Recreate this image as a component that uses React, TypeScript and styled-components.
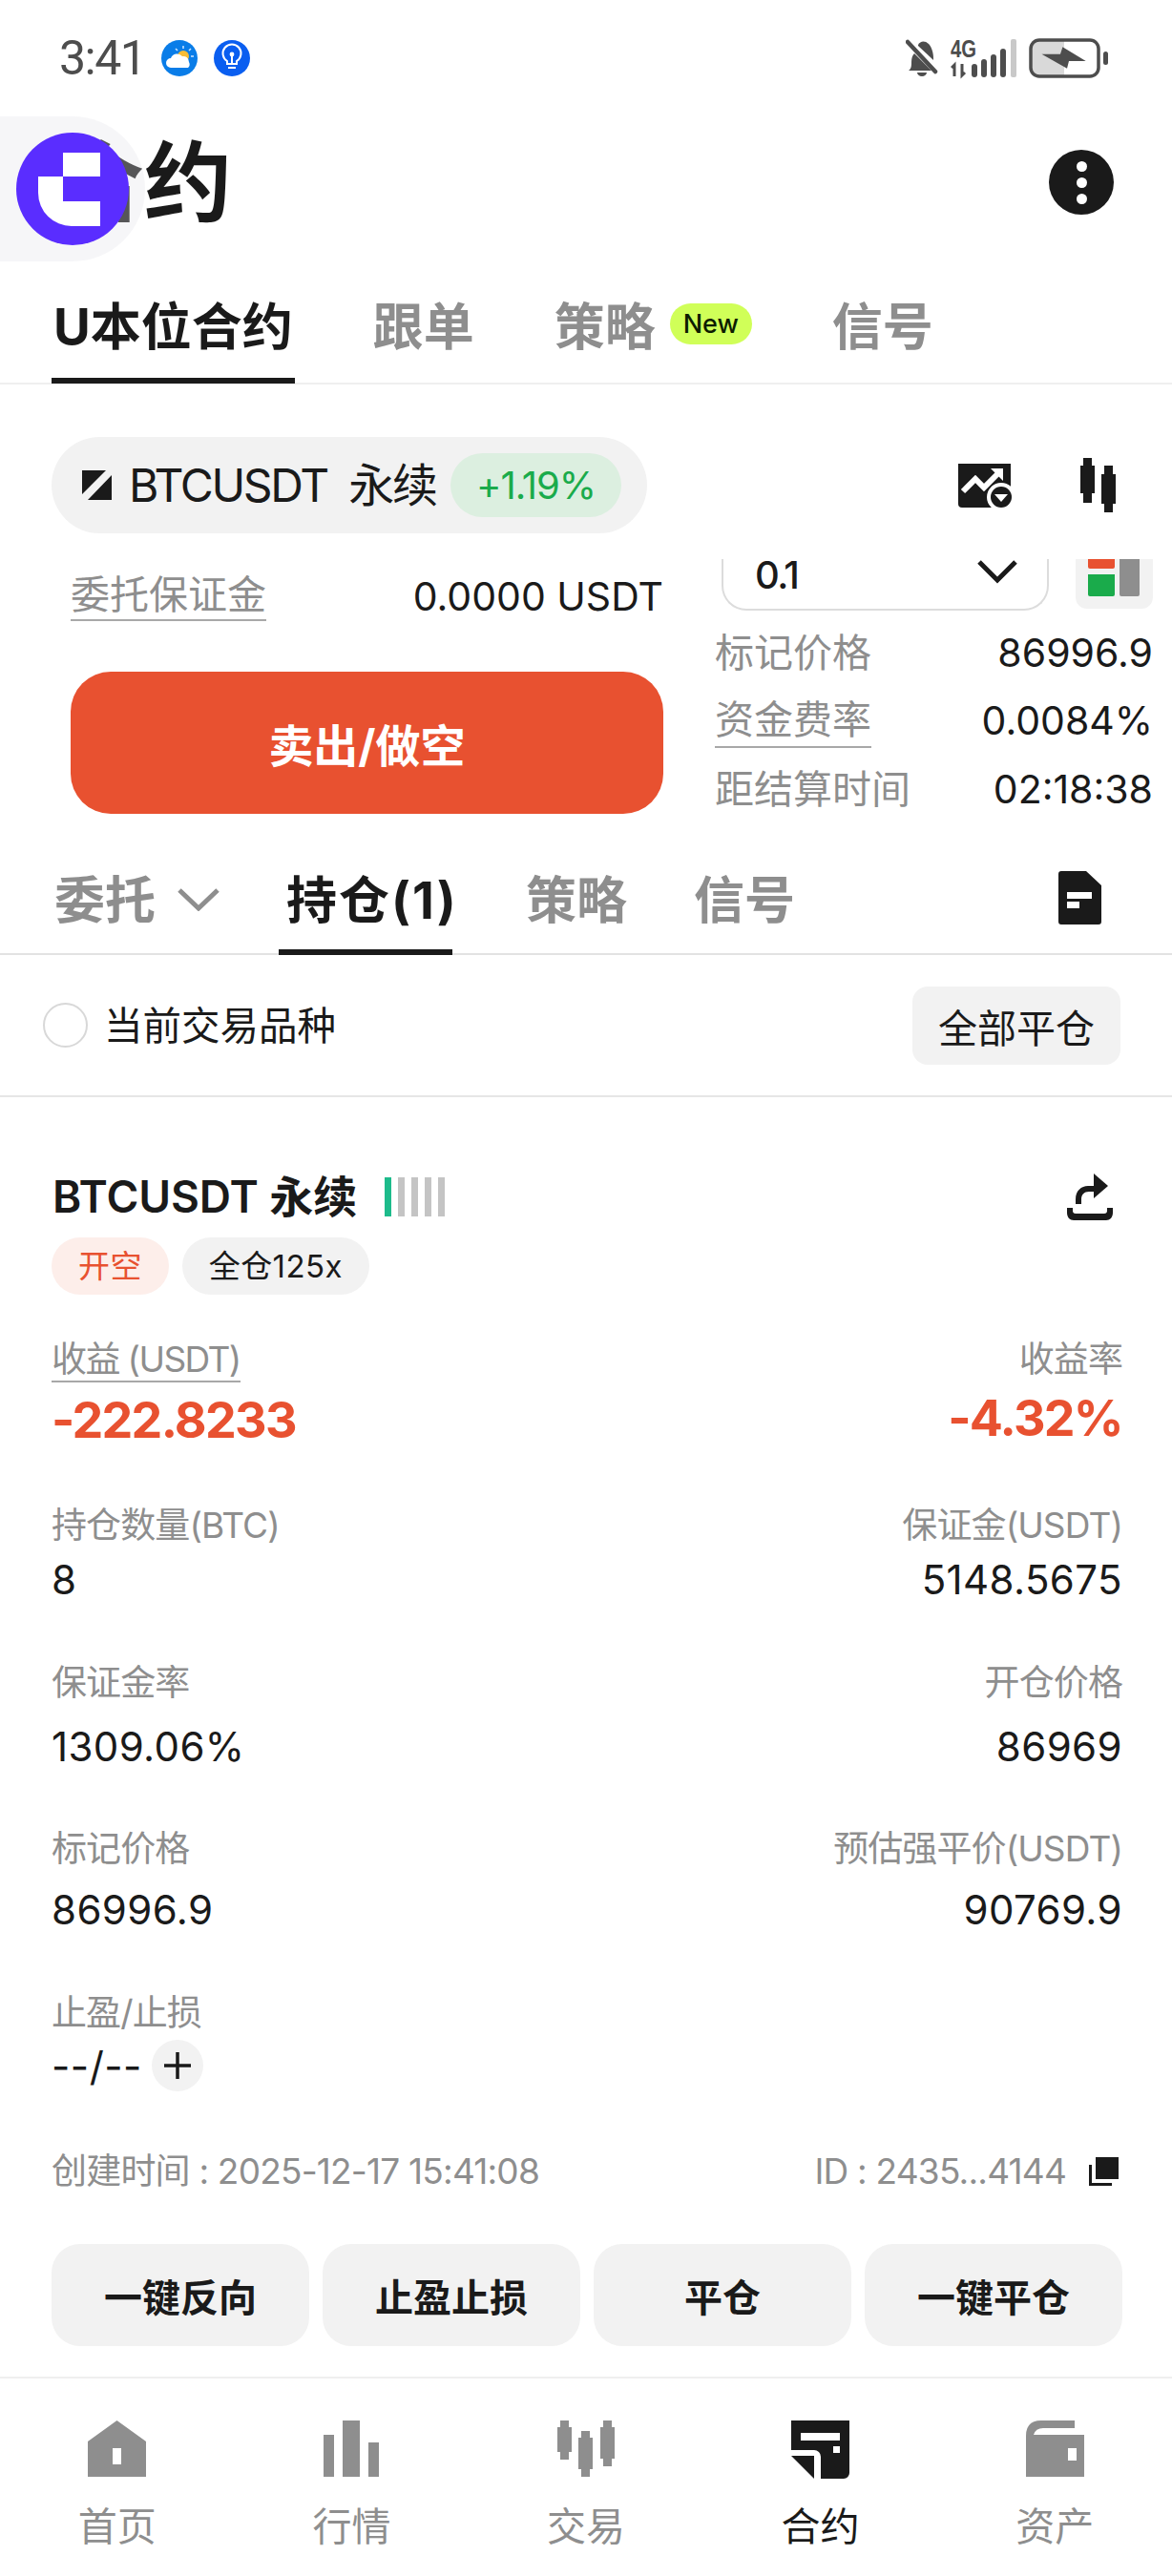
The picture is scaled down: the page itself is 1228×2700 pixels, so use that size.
import * as React from "react";
import styled, { createGlobalStyle } from "styled-components";

const COLORS = {
  text: "#1a1a1a",
  muted: "#8e8e8e",
  fill: "#f2f2f2",
  line: "#efefef",
  sell: "#e85130",
  rise: "#1aab4b",
};

const FONT = `Inter, "Noto Sans CJK SC", sans-serif`;

const GlobalStyle = createGlobalStyle`
  html, body {
    margin: 0;
    padding: 0;
    background: #fff;
  }
  * {
    box-sizing: border-box;
  }
`;

const Page = styled.div`
  position: relative;
  width: 1228px;
  height: 2700px;
  overflow: hidden;
  background: #fff;
  color: ${COLORS.text};
  font-family: ${FONT};
`;

/* ---- status bar ---- */

const StatusBar = styled.div`
  height: 122px;
  padding: 0 67px 0 62px;
  display: flex;
  align-items: center;
  justify-content: space-between;
`;

const StatusGroup = styled.div<{ $gap: number }>`
  display: flex;
  align-items: center;
  gap: ${(p) => p.$gap}px;
`;

const Clock = styled.span`
  font-family: Roboto, sans-serif;
  font-size: 50px;
  line-height: 50px;
  letter-spacing: -1.5px;
  color: #4d4d4d;
`;

const FourG = styled.text`
  font-family: "Liberation Sans", sans-serif;
  font-size: 25px;
  font-weight: 700;
  fill: #4d4d4d;
`;

/* ---- title ---- */

const TitleRow = styled.div`
  height: 152px;
  padding: 0 61px 14px 59px;
  display: flex;
  align-items: center;
  justify-content: space-between;
`;

const Title = styled.h1`
  margin: 2px 0 0;
  font-size: 92px;
  line-height: 100px;
  font-weight: 700;
`;

const MoreButton = styled.div`
  width: 68px;
  height: 68px;
  border-radius: 50%;
  background: ${COLORS.text};
  display: flex;
  flex-direction: column;
  align-items: center;
  justify-content: center;
  gap: 6px;
`;

const MoreDot = styled.i`
  width: 11px;
  height: 11px;
  border-radius: 50%;
  background: #fff;
`;

const FloatingDock = styled.div`
  position: absolute;
  left: 0;
  top: 122px;
  width: 152px;
  height: 152px;
  border-radius: 0 76px 76px 0;
  background: rgba(225, 225, 232, 0.3);
  display: flex;
  align-items: center;
  padding-left: 17px;
`;

/* ---- top tabs ---- */

const TopTabs = styled.div`
  height: 129px;
  padding-left: 54px;
  display: flex;
  gap: 80px;
  border-bottom: 2px solid ${COLORS.line};
`;

const TopTab = styled.div<{ $active?: boolean }>`
  height: 128px;
  padding: 32px 2px 0;
  font-size: 53px;
  line-height: 74px;
  font-weight: 700;
  white-space: nowrap;
  display: flex;
  align-items: flex-start;
  color: ${(p) => (p.$active ? COLORS.text : COLORS.muted)};
  border-bottom: 6px solid ${(p) => (p.$active ? COLORS.text : "transparent")};
`;

const NewBadge = styled.span`
  margin: 12px 0 0 15px;
  width: 86px;
  height: 43px;
  border-radius: 22px;
  background: #d0ff58;
  color: #0d1c00;
  font-size: 27px;
  line-height: 43px;
  font-weight: 500;
  text-align: center;
`;

/* ---- instrument ---- */

const InstrumentRow = styled.div`
  margin-top: 55px;
  padding: 0 59px 0 54px;
  display: flex;
  align-items: center;
  justify-content: space-between;
`;

const InstrumentPill = styled.div`
  width: 624px;
  height: 101px;
  border-radius: 51px;
  background: ${COLORS.fill};
  padding: 0 27px 0 32px;
  display: flex;
  align-items: center;
`;

const InstrumentName = styled.span`
  margin-left: 18px;
  font-size: 48px;
  line-height: 60px;
  letter-spacing: -2.3px;
  white-space: pre;
`;

const ChangePill = styled.span`
  margin-left: auto;
  width: 179px;
  height: 67px;
  border-radius: 34px;
  background: #dcefe0;
  color: ${COLORS.rise};
  font-size: 40px;
  line-height: 67px;
  letter-spacing: -1px;
  text-align: center;
`;

const ChartTools = styled.div`
  display: flex;
  align-items: center;
  gap: 72px;
`;

/* ---- order panel ---- */

const OrderPanel = styled.div`
  margin-top: 27px;
  height: 307px;
  padding: 0 20px 0 74px;
  display: grid;
  grid-template-columns: 621px 459px;
  justify-content: space-between;
`;

const OrderLeft = styled.div`
  display: flex;
  flex-direction: column;
`;

const MarginRow = styled.div`
  margin-top: 15px;
  height: 48px;
  display: flex;
  align-items: center;
  justify-content: space-between;
`;

const Dotted = styled.span`
  display: inline-block;
  color: ${COLORS.muted};
  border-bottom: 2px solid #a8a8a8;
`;

const MarginLabel = styled(Dotted)`
  font-size: 41px;
  line-height: 48px;
  padding-bottom: 2px;
`;

const PlainValue = styled.span`
  font-size: 41px;
  line-height: 48px;
  white-space: nowrap;
`;

const SellButton = styled.button`
  margin-top: 55px;
  height: 149px;
  border: none;
  border-radius: 42px;
  background: ${COLORS.sell};
  color: #fff;
  font-family: ${FONT};
  font-size: 47px;
  font-weight: 700;
`;

const OrderRight = styled.div`
  display: flex;
  flex-direction: column;
`;

const SizeRow = styled.div`
  height: 54px;
  display: flex;
  justify-content: space-between;
  padding-left: 7px;
`;

const SizeSelect = styled.div`
  width: 343px;
  height: 54px;
  padding: 0 31px 0 33px;
  display: flex;
  justify-content: space-between;
  border: 2px solid #dcdcdc;
  border-top: none;
  border-radius: 0 0 26px 26px;
`;

const SizeValue = styled.span`
  font-size: 40px;
  line-height: 34px;
  font-weight: 500;
  letter-spacing: -1.5px;
`;

const DepthToggle = styled.div`
  width: 81px;
  height: 52px;
  padding: 0 14px 0 13px;
  background: ${COLORS.fill};
  border-radius: 0 0 12px 12px;
  display: grid;
  grid-template-columns: 28px 21px;
  justify-content: space-between;
`;

const DepthStack = styled.div`
  height: 39px;
  display: flex;
  flex-direction: column;
  gap: 6px;
`;

const DepthBlock = styled.i<{ $color: string; $h: number }>`
  display: block;
  height: ${(p) => p.$h}px;
  border-radius: 0 0 2px 2px;
  background: ${(p) => p.$color};
`;

const QuoteList = styled.div`
  margin-top: 8px;
`;

const QuoteRow = styled.div`
  height: 71.5px;
  display: flex;
  align-items: center;
  justify-content: space-between;
`;

const QuoteLabel = styled.span`
  color: ${COLORS.muted};
  font-size: 41px;
  line-height: 48px;
`;

const QuoteLabelLined = styled(Dotted)`
  font-size: 41px;
  line-height: 48px;
  padding-bottom: 4px;
  margin-top: 4px;
`;

/* ---- list tabs ---- */

const ListTabs = styled.div`
  height: 108px;
  padding: 0 74px 0 49px;
  display: flex;
  gap: 54px;
  border-bottom: 2px solid #e2e2e2;
`;

const ListTab = styled.div<{ $active?: boolean }>`
  height: 108px;
  padding: 16px 8px 0;
  font-size: 53px;
  line-height: 70px;
  font-weight: 700;
  white-space: nowrap;
  display: flex;
  align-items: flex-start;
  color: ${(p) => (p.$active ? COLORS.text : COLORS.muted)};
  border-bottom: 6px solid ${(p) => (p.$active ? COLORS.text : "transparent")};
  width: ${(p) => (p.$active ? "182px" : "auto")};
  margin-right: ${(p) => (p.$active ? "15px" : "0")};
  letter-spacing: ${(p) => (p.$active ? "2px" : "0")};
`;

const ListTabChevron = styled.svg`
  margin: 22px 0 0 23px;
`;

const ListIcon = styled.svg`
  margin: 20px 0 0 auto;
`;

/* ---- filter ---- */

const FilterRow = styled.div`
  height: 149px;
  padding: 0 54px 0 45px;
  display: flex;
  align-items: center;
  border-bottom: 2px solid #e6e6e6;
`;

const RadioMark = styled.span`
  width: 47px;
  height: 47px;
  border-radius: 50%;
  border: 2px solid #d8d8d8;
`;

const FilterLabel = styled.span`
  margin: 2px 0 0 17px;
  font-size: 40.5px;
  line-height: 50px;
`;

const CloseAllButton = styled.button`
  margin-left: auto;
  width: 218px;
  height: 82px;
  border: none;
  border-radius: 16px;
  background: ${COLORS.fill};
  color: ${COLORS.text};
  font-family: ${FONT};
  font-size: 41px;
`;

/* ---- position card ---- */

const PositionCard = styled.div`
  padding: 0 52px 0 54px;
`;

const CardHeader = styled.div`
  margin-top: 81px;
  height: 46px;
  display: flex;
  align-items: center;
`;

const CardTitle = styled.span`
  margin-left: 1px;
  font-size: 46px;
  line-height: 46px;
  font-weight: 600;
  letter-spacing: -0.1px;
  white-space: pre;
`;

const RiskBars = styled.div`
  margin-left: 29px;
  display: flex;
  gap: 7px;
`;

const RiskBar = styled.i<{ $on?: boolean }>`
  width: 7px;
  height: 41px;
  background: ${(p) => (p.$on ? "#1dbb8b" : "#c4c4c4")};
`;

const ShareSlot = styled.div`
  margin-left: auto;
  margin-right: 10px;
  height: 49px;
`;

const TagRow = styled.div`
  margin-top: 20px;
  display: flex;
  gap: 14px;
`;

const Tag = styled.span<{ $tone?: "sell" }>`
  height: 60px;
  padding: 0 28px;
  border-radius: 30px;
  font-size: 33px;
  line-height: 60px;
  letter-spacing: 0.4px;
  background: ${(p) => (p.$tone === "sell" ? "#fdeeea" : COLORS.fill)};
  color: ${(p) => (p.$tone === "sell" ? COLORS.sell : COLORS.text)};
`;

const MetricRow = styled.div<{ $top: number }>`
  margin-top: ${(p) => p.$top}px;
  display: flex;
  justify-content: space-between;
`;

const Metric = styled.div<{ $right?: boolean }>`
  display: flex;
  flex-direction: column;
  align-items: ${(p) => (p.$right ? "flex-end" : "flex-start")};
`;

const MetricLabel = styled.span`
  height: 44px;
  font-size: 37px;
  line-height: 44px;
  letter-spacing: -0.9px;
  color: ${COLORS.muted};
`;

const MetricLabelLined = styled(MetricLabel)`
  height: 46px;
  letter-spacing: -1.6px;
  border-bottom: 2px solid #a8a8a8;
`;

const MetricValue = styled.span<{ $gap: number }>`
  margin-top: ${(p) => p.$gap}px;
  height: 56px;
  font-size: 42px;
  line-height: 56px;
  letter-spacing: 0.4px;
`;

const PnlValue = styled.span`
  margin-top: 12px;
  height: 56px;
  font-size: 52px;
  line-height: 56px;
  font-weight: 700;
  letter-spacing: -1.7px;
  color: ${COLORS.sell};
`;

const StopLine = styled.div`
  margin-top: 5px;
  height: 56px;
  display: flex;
  align-items: center;
  font-size: 42px;
  letter-spacing: 0.5px;
`;

const AddButton = styled.span`
  margin-left: 10px;
  width: 54px;
  height: 54px;
  border-radius: 50%;
  background: ${COLORS.fill};
  display: flex;
  align-items: center;
  justify-content: center;
`;

const MetaRow = styled.div`
  margin-top: 61px;
  height: 44px;
  display: flex;
  align-items: center;
  justify-content: space-between;
  color: ${COLORS.muted};
  font-size: 37px;
  line-height: 44px;
  letter-spacing: -0.8px;
`;

const MetaId = styled.span`
  display: flex;
  align-items: center;
  gap: 24px;
  padding-right: 4px;
`;

const ActionRow = styled.div`
  margin-top: 54px;
  display: grid;
  grid-template-columns: repeat(4, 1fr);
  gap: 14px;
`;

const ActionButton = styled.button`
  height: 107px;
  border: none;
  border-radius: 30px;
  background: ${COLORS.fill};
  color: ${COLORS.text};
  font-family: ${FONT};
  font-size: 40px;
  font-weight: 700;
`;

/* ---- bottom navigation ---- */

const BottomNav = styled.nav`
  margin-top: 32px;
  height: 210px;
  border-top: 2px solid ${COLORS.line};
  display: grid;
  grid-template-columns: repeat(5, 1fr);
`;

const NavItem = styled.div<{ $active?: boolean }>`
  padding-top: 44px;
  display: flex;
  flex-direction: column;
  align-items: center;
  color: ${(p) => (p.$active ? COLORS.text : COLORS.muted)};
`;

const NavIcon = styled.div`
  height: 61px;
  display: flex;
  align-items: flex-start;
`;

const NavLabel = styled.span`
  margin-top: 25px;
  font-size: 41px;
  line-height: 50px;
`;

/* ---- drawings ---- */

const WeatherIcon = () => (
  <svg width="38" height="38" viewBox="0 0 38 38">
    <circle cx="19" cy="19" r="19" fill="#0a7de8" />
    <circle cx="23" cy="17" r="6" fill="#f7bd37" />
    <path d="M23 6v3M31 9l-2 2M34 17h-3M15 9l2 2" stroke="#cfe6ff" strokeWidth="1.5" />
    <path d="M10 29a5 5 0 0 1 0-10 7 7 0 0 1 12-2 6 6 0 0 1 7 6 5 5 0 0 1-1 6z" fill="#fff" />
  </svg>
);

const BulbIcon = () => (
  <svg width="38" height="38" viewBox="0 0 38 38">
    <circle cx="19" cy="19" r="19" fill="#0a5ef0" />
    <path d="M14 25v-3a9.5 9.5 0 1 1 10 0v3z" fill="none" stroke="#fff" strokeWidth="2" />
    <path d="M15 29h8" stroke="#fff" strokeWidth="2" />
    <circle cx="19" cy="15" r="2.4" fill="#fff" />
    <path d="M19 16v8" stroke="#fff" strokeWidth="2" />
  </svg>
);

const MutedBell = () => (
  <svg width="34" height="40" viewBox="0 0 34 40">
    <path d="M3 33c3-2 3-5 3-9 0-4 1-7 3-9l18 18z" fill="#4d4d4d" />
    <path d="M13 6c2-4 7-5 11-1 3 3 5 9 5 15v2L13 7z" fill="#4d4d4d" />
    <path d="M2 3l29 31" stroke="#4d4d4d" strokeWidth="4.5" strokeLinecap="round" />
    <path d="M12 35h10a5 4 0 0 1-10 0z" fill="#4d4d4d" />
  </svg>
);

const SignalIcon = () => (
  <svg width="69" height="52" viewBox="0 -6 69 52">
    <FourG x="0" y="19" textLength="27" lengthAdjust="spacingAndGlyphs">
      4G
    </FourG>
    <path d="M4 39V27l-3 3M12 26v12l3-3" fill="none" stroke="#4d4d4d" strokeWidth="3" />
    <rect x="22" y="26" width="6" height="14" rx="3" fill="#4d4d4d" />
    <rect x="32" y="21" width="6" height="19" rx="3" fill="#4d4d4d" />
    <rect x="42" y="16" width="6" height="24" rx="3" fill="#4d4d4d" />
    <rect x="52" y="10" width="6" height="30" rx="3" fill="#4d4d4d" />
    <rect x="63" y="0" width="6" height="40" rx="2" fill="#c9c9c9" />
  </svg>
);

const BatteryIcon = () => (
  <svg width="83" height="42" viewBox="0 0 83 42">
    <rect x="3" y="3" width="34" height="36" fill="#d9d9d9" />
    <rect x="2" y="2" width="71" height="38" rx="9" fill="none" stroke="#4d4d4d" strokeWidth="3.5" />
    <path d="M13.500 16.700H33l2.400-7.400L59.700 24H42l-2 7.700z" fill="#4d4d4d" />
    <rect x="78" y="14" width="5" height="14" rx="2.5" fill="#4d4d4d" />
  </svg>
);

const LogoMark = () => (
  <svg width="118" height="118" viewBox="0 0 118 118">
    <circle cx="59" cy="59" r="59" fill="#5a2dff" />
    <path d="M49 21h39v25H49zM23 46h26v26h39v26H58a35 35 0 0 1-35-35z" fill="#fff" />
  </svg>
);

const FuturesGlyph = () => (
  <svg width="31" height="31" viewBox="0 0 31 31">
    <path d="M0 0h25L0 25zM31 5v26H6z" fill={COLORS.text} />
  </svg>
);

const ChartAlertIcon = () => (
  <svg width="56" height="46" viewBox="0 0 56 46">
    <path d="M0 0h55v46H4a4 4 0 0 1-4-4z" fill={COLORS.text} />
    <path d="M5 29l13-13 9 9 14-14" fill="none" stroke="#fff" strokeWidth="6" />
    <path d="M34 5h13v13z" fill="#fff" />
    <circle cx="45" cy="35" r="15" fill="#fff" />
    <circle cx="45" cy="35" r="11" fill={COLORS.text} />
    <path d="M38 32h14l-7 8z" fill="#fff" />
  </svg>
);

const CandleIcon = () => (
  <svg width="37" height="57" viewBox="0 0 37 57" fill={COLORS.text}>
    <path d="M3 0h9v8h3v29h-3v10H3V37H0V8h3z" />
    <path d="M25 8h9v9h3v31h-3v9h-9v-9h-3V17h3z" />
  </svg>
);

const ShareArrow = () => (
  <svg width="48" height="49" viewBox="0 0 48 49" fill={COLORS.text}>
    <path d="M9 32v-5c0-9 6-14 13-14h6v6h-5c-5 0-8 3-8 8v5z" />
    <path d="M28 0l15 13-15 13z" />
    <path d="M0 36h6v3c0 2 1 3 3 3h30c2 0 3-1 3-3v-3h6v5c0 5-3 8-7 8H7c-4 0-7-3-7-8z" />
  </svg>
);

const CopyIcon = () => (
  <svg width="31" height="30" viewBox="0 0 31 30" fill={COLORS.text}>
    <rect x="7" y="0" width="24" height="23" />
    <path d="M0 8h3v19h21v3H0z" />
  </svg>
);

const HomeIcon = () => (
  <svg width="61" height="59" viewBox="0 0 61 59" fill="currentColor">
    <path fillRule="evenodd" d="M30.500 0L61 22v37H0V22zM26 29v17h9V29z" />
  </svg>
);

const MarketIcon = () => (
  <svg width="58" height="59" viewBox="0 0 58 59" fill="currentColor">
    <rect x="0" y="15" width="11" height="44" />
    <rect x="20" y="0" width="18" height="59" />
    <rect x="47" y="23" width="11" height="36" />
  </svg>
);

const TradeIcon = () => (
  <svg width="60" height="59" viewBox="0 0 60 59" fill="currentColor">
    <path d="M3 0h9v7h3v26h-3v8H3v-8H0V7h3z" />
    <path d="M25 11h9v7h3v33h-3v8h-9v-8h-3V18h3z" />
    <path d="M48 0h9v7h3v33h-3v8h-9v-8h-3V7h3z" />
  </svg>
);

const ContractIcon = () => (
  <svg width="61" height="61" viewBox="0 0 61 61" fill="currentColor">
    <path
      fillRule="evenodd"
      d="M0 0h61v55a6 6 0 0 1-6 6H31V38a7 7 0 0 0-7-7H0zM10 13v8h41v-8zM44 27v7h7v-7z"
    />
    <path d="M0 37h24v24z" />
  </svg>
);

const WalletIcon = () => (
  <svg width="61" height="59" viewBox="0 0 61 59" fill="currentColor">
    <path fillRule="evenodd" d="M0 59V16Q0 0 16 0h35v8H18q-8 0-10 7h53v44zM44 29v13h9V29z" />
  </svg>
);

const NAV_ITEMS = [
  { label: "首页", icon: <HomeIcon /> },
  { label: "行情", icon: <MarketIcon /> },
  { label: "交易", icon: <TradeIcon /> },
  { label: "合约", icon: <ContractIcon />, active: true },
  { label: "资产", icon: <WalletIcon /> },
];

const ACTIONS = ["一键反向", "止盈止损", "平仓", "一键平仓"];

export default function App() {
  return (
    <Page>
      <GlobalStyle />

      <StatusBar>
        <StatusGroup $gap={17}>
          <Clock>3:41</Clock>
          <WeatherIcon />
          <BulbIcon />
        </StatusGroup>
        <StatusGroup $gap={13}>
          <MutedBell />
          <SignalIcon />
          <BatteryIcon />
        </StatusGroup>
      </StatusBar>

      <TitleRow>
        <Title>合约</Title>
        <MoreButton>
          <MoreDot />
          <MoreDot />
          <MoreDot />
        </MoreButton>
      </TitleRow>

      <FloatingDock>
        <LogoMark />
      </FloatingDock>

      <TopTabs>
        <TopTab $active>U本位合约</TopTab>
        <TopTab>跟单</TopTab>
        <TopTab>
          策略
          <NewBadge>New</NewBadge>
        </TopTab>
        <TopTab>信号</TopTab>
      </TopTabs>

      <InstrumentRow>
        <InstrumentPill>
          <FuturesGlyph />
          <InstrumentName>BTCUSDT  永续</InstrumentName>
          <ChangePill>+1.19%</ChangePill>
        </InstrumentPill>
        <ChartTools>
          <ChartAlertIcon />
          <CandleIcon />
        </ChartTools>
      </InstrumentRow>

      <OrderPanel>
        <OrderLeft>
          <MarginRow>
            <MarginLabel>委托保证金</MarginLabel>
            <PlainValue>0.0000 USDT</PlainValue>
          </MarginRow>
          <SellButton>卖出/做空</SellButton>
        </OrderLeft>
        <OrderRight>
          <SizeRow>
            <SizeSelect>
              <SizeValue>0.1</SizeValue>
              <svg width="42" height="28" viewBox="0 0 42 28">
                <path d="M2 3l19 19L40 3" fill="none" stroke={COLORS.text} strokeWidth="5" />
              </svg>
            </SizeSelect>
            <DepthToggle>
              <DepthStack>
                <DepthBlock $color={COLORS.sell} $h={10} />
                <DepthBlock $color={COLORS.rise} $h={23} />
              </DepthStack>
              <DepthBlock $color={COLORS.muted} $h={39} />
            </DepthToggle>
          </SizeRow>
          <QuoteList>
            <QuoteRow>
              <QuoteLabel>标记价格</QuoteLabel>
              <PlainValue>86996.9</PlainValue>
            </QuoteRow>
            <QuoteRow>
              <QuoteLabelLined>资金费率</QuoteLabelLined>
              <PlainValue>0.0084%</PlainValue>
            </QuoteRow>
            <QuoteRow>
              <QuoteLabel>距结算时间</QuoteLabel>
              <PlainValue>02:18:38</PlainValue>
            </QuoteRow>
          </QuoteList>
        </OrderRight>
      </OrderPanel>

      <ListTabs>
        <ListTab>
          委托
          <ListTabChevron width="44" height="24" viewBox="0 0 44 24">
            <path d="M2 2l20 19L42 2" fill="none" stroke={COLORS.muted} strokeWidth="5" />
          </ListTabChevron>
        </ListTab>
        <ListTab $active>持仓(1)</ListTab>
        <ListTab>策略</ListTab>
        <ListTab>信号</ListTab>
        <ListIcon width="45" height="56" viewBox="0 0 45 56">
          <path
            fillRule="evenodd"
            fill={COLORS.text}
            d="M3 0h26l16 15v38a3 3 0 0 1-3 3H3a3 3 0 0 1-3-3V3a3 3 0 0 1 3-3zM9 22v7h26v-7zM9 32v7h13v-7z"
          />
        </ListIcon>
      </ListTabs>

      <FilterRow>
        <RadioMark />
        <FilterLabel>当前交易品种</FilterLabel>
        <CloseAllButton>全部平仓</CloseAllButton>
      </FilterRow>

      <PositionCard>
        <CardHeader>
          <CardTitle>BTCUSDT 永续</CardTitle>
          <RiskBars>
            <RiskBar $on />
            <RiskBar />
            <RiskBar />
            <RiskBar />
            <RiskBar />
          </RiskBars>
          <ShareSlot>
            <ShareArrow />
          </ShareSlot>
        </CardHeader>

        <TagRow>
          <Tag $tone="sell">开空</Tag>
          <Tag>全仓125x</Tag>
        </TagRow>

        <MetricRow $top={46}>
          <Metric>
            <MetricLabelLined>收益 (USDT)</MetricLabelLined>
            <PnlValue>-222.8233</PnlValue>
          </Metric>
          <Metric $right>
            <MetricLabel>收益率</MetricLabel>
            <PnlValue>-4.32%</PnlValue>
          </Metric>
        </MetricRow>

        <MetricRow $top={60}>
          <Metric>
            <MetricLabel>持仓数量(BTC)</MetricLabel>
            <MetricValue $gap={7}>8</MetricValue>
          </Metric>
          <Metric $right>
            <MetricLabel>保证金(USDT)</MetricLabel>
            <MetricValue $gap={7}>5148.5675</MetricValue>
          </Metric>
        </MetricRow>

        <MetricRow $top={58}>
          <Metric>
            <MetricLabel>保证金率</MetricLabel>
            <MetricValue $gap={17}>1309.06%</MetricValue>
          </Metric>
          <Metric $right>
            <MetricLabel>开仓价格</MetricLabel>
            <MetricValue $gap={17}>86969</MetricValue>
          </Metric>
        </MetricRow>

        <MetricRow $top={57}>
          <Metric>
            <MetricLabel>标记价格</MetricLabel>
            <MetricValue $gap={14}>86996.9</MetricValue>
          </Metric>
          <Metric $right>
            <MetricLabel>预估强平价(USDT)</MetricLabel>
            <MetricValue $gap={14}>90769.9</MetricValue>
          </Metric>
        </MetricRow>

        <MetricRow $top={58}>
          <Metric>
            <MetricLabel>止盈/止损</MetricLabel>
            <StopLine>
              --/--
              <AddButton>
                <svg width="28" height="28" viewBox="0 0 28 28">
                  <path d="M0 14h28M14 0v28" stroke={COLORS.text} strokeWidth="3.500" />
                </svg>
              </AddButton>
            </StopLine>
          </Metric>
        </MetricRow>

        <MetaRow>
          <span>创建时间 : 2025-12-17 15:41:08</span>
          <MetaId>
            ID : 2435...4144
            <CopyIcon />
          </MetaId>
        </MetaRow>

        <ActionRow>
          {ACTIONS.map((label) => (
            <ActionButton key={label}>{label}</ActionButton>
          ))}
        </ActionRow>
      </PositionCard>

      <BottomNav>
        {NAV_ITEMS.map((item) => (
          <NavItem key={item.label} $active={item.active}>
            <NavIcon>{item.icon}</NavIcon>
            <NavLabel>{item.label}</NavLabel>
          </NavItem>
        ))}
      </BottomNav>
    </Page>
  );
}
